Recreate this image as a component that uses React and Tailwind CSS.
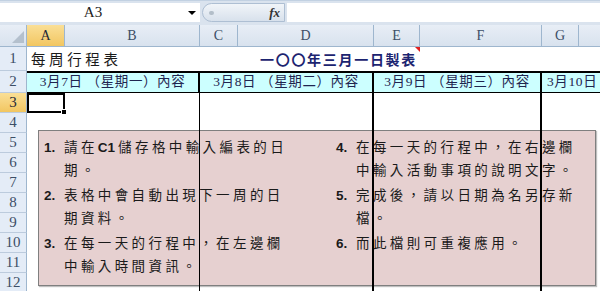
import React from "react";

function RH({ n, active, first }) {
  return (
    <div
      className={`w-[27px] shrink-0 flex justify-center border-r border-b border-r-[#9eb6ce] border-b-[#bccbdd] text-[15px] leading-none ${
        first ? "items-end pb-[4px]" : "items-center"
      } ${
        active
          ? "bg-linear-to-b from-[#fadf96] to-[#f2c660] text-[#1f2937]"
          : "bg-[#e4ecf7] text-[#3c4e66]"
      }`}
    >
      {n}
    </div>
  );
}

function ColHead({ w, label, active }) {
  return (
    <div
      className={`${w} shrink-0 h-full flex items-center justify-center border-r border-[#9eb6ce] text-[14px] ${
        active
          ? "bg-linear-to-b from-[#fadf96] to-[#f2c660] text-[#1f2937]"
          : "text-[#3c4e66]"
      }`}
    >
      {label}
    </div>
  );
}

function PlainRow({ n }) {
  return (
    <div className="relative z-10 h-[20px] shrink-0 flex">
      <RH n={n} />
      <div className="w-[38px] shrink-0" />
      <div className="w-[135px] shrink-0 border-r border-black" />
      <div className="w-[38px] shrink-0" />
      <div className="w-[136px] shrink-0 border-r-2 border-black" />
      <div className="w-[46px] shrink-0" />
      <div className="w-[122px] shrink-0 border-r-2 border-black" />
      <div className="w-[37px] shrink-0" />
      <div className="flex-1" />
    </div>
  );
}

function Item({ num, lines, first }) {
  return (
    <div className={`flex ${first ? "" : "mt-[2px]"}`}>
      <div className="w-[20px] shrink-0 font-bold tracking-normal">{num}</div>
      <div>
        {lines.map((l, i) => (
          <div key={i} className="whitespace-nowrap">
            {l}
          </div>
        ))}
      </div>
    </div>
  );
}

export default function App() {
  return (
    <div className="w-[600px] h-[291px] overflow-hidden bg-white flex flex-col font-['Liberation_Serif','Noto_Sans_CJK_TC',serif]">
      {/* formula bar */}
      <div className="h-[25px] shrink-0 bg-[#dae3ee] border-t border-[#c2d1e2] flex pt-[2px] pb-[3px]">
        <div className="w-[200px] shrink-0 bg-white flex items-center">
          <div className="w-[186px] text-center text-[15px] text-[#222] leading-none">A3</div>
          <div className="w-0 h-0 border-l-[4px] border-r-[4px] border-t-[4px] border-l-transparent border-r-transparent border-t-black ml-[2px]" />
        </div>
        <div className="ml-[2px] w-[83px] shrink-0 rounded-l-full border border-[#aebfd3] bg-linear-to-b from-[#f1f5f9] to-[#d8e1ec] flex items-center justify-between pl-[6px] pr-[4px]">
          <div className="w-[5px] h-[4px] rounded-full bg-[#b3bec9]" />
          <span className="italic font-bold text-[13px] text-[#333] leading-none">fx</span>
        </div>
        <div className="flex-1 bg-white ml-[2px]" />
      </div>

      {/* column headers */}
      <div className="h-[22px] shrink-0 flex bg-linear-to-b from-[#e8eef6] to-[#d8e2ee] border-b border-[#9eb6ce]">
        <div className="w-[27px] shrink-0 h-full relative border-r border-[#9eb6ce]">
          <div className="absolute right-[2px] bottom-[3px] w-0 h-0 border-b-[12px] border-l-[12px] border-b-[#b4c0cd] border-l-transparent" />
        </div>
        <ColHead w="w-[38px]" label="A" active />
        <ColHead w="w-[135px]" label="B" />
        <ColHead w="w-[38px]" label="C" />
        <ColHead w="w-[136px]" label="D" />
        <ColHead w="w-[46px]" label="E" />
        <ColHead w="w-[122px]" label="F" />
        <ColHead w="w-[37px]" label="G" />
        <div className="flex-1" />
      </div>

      {/* body */}
      <div className="flex-1 relative overflow-hidden bg-white">
        {/* text box lying over the sheet */}
        <div className="absolute z-0 left-[38px] top-[83px] w-[558px] h-[156px] bg-[#e6d0d0] border border-[#7f7f7f] shadow-[1px_1px_1px_rgba(0,0,0,0.25)] flex font-['Liberation_Sans','Noto_Sans_CJK_TC',sans-serif] text-[13.5px] leading-[23px] tracking-[3.4px] text-[#1a1a1a]">
          <div className="w-[297px] shrink-0 pl-[5px] pt-[5px]">
            <Item first num="1." lines={[<>請在<span className="tracking-normal font-semibold mr-[3px]">C1</span>儲存格中輸入編表的日</>, "期。"]} />
            <Item num="2." lines={["表格中會自動出現下一周的日", "期資料。"]} />
            <Item num="3." lines={["在每一天的行程中，在左邊欄", "中輸入時間資訊。"]} />
          </div>
          <div className="flex-1 pt-[5px]">
            <Item first num="4." lines={["在每一天的行程中，在右邊欄", "中輸入活動事項的說明文字。"]} />
            <Item num="5." lines={["完成後，請以日期為名另存新", "檔。"]} />
            <Item num="6." lines={["而此檔則可重複應用。"]} />
          </div>
        </div>

        {/* row 1 */}
        <div className="relative z-10 h-[24px] flex">
          <RH n="1" first />
          <div className="w-[173px] shrink-0 flex items-center pl-[4px] pt-[3px] text-[14.5px] tracking-[3.6px] text-[#1a1a1a] whitespace-nowrap">
            每周行程表
          </div>
          <div className="w-[220px] shrink-0 relative flex items-center justify-end pr-[3px] pt-[3px] text-[14px] font-bold tracking-[1.7px] text-[#1c2470] whitespace-nowrap">
            一〇〇年三月一日製表
            <div className="absolute right-0 top-0 w-0 h-0 border-t-[5px] border-l-[5px] border-t-[#e02020] border-l-transparent" />
          </div>
          <div className="flex-1" />
        </div>

        {/* row 2 */}
        <div className="relative z-10 h-[22px] flex">
          <RH n="2" />
          <div className="flex-1 flex border-t-2 border-b border-black bg-[#ccffff] text-[13.5px] tracking-[0.6px] text-[#1f2550] whitespace-nowrap">
            <div className="w-[173px] shrink-0 border-r-2 border-black flex items-center justify-center">3月7日 （星期一）內容</div>
            <div className="w-[174px] shrink-0 border-r-2 border-black flex items-center justify-center">3月8日 （星期二）內容</div>
            <div className="w-[168px] shrink-0 border-r-2 border-black flex items-center justify-center">3月9日 （星期三）內容</div>
            <div className="flex-1 overflow-hidden flex items-center pl-[5px]">3月10日 （星期四）內容</div>
          </div>
        </div>

        {/* row 3 */}
        <div className="relative z-10 h-[20px] flex">
          <RH n="3" active />
          <div className="w-[38px] shrink-0 relative border-2 border-black">
            <div className="absolute -right-[4px] -bottom-[4px] w-[6px] h-[6px] bg-black border border-white" />
          </div>
          <div className="w-[135px] shrink-0 border-r border-black" />
          <div className="w-[38px] shrink-0" />
          <div className="w-[136px] shrink-0 border-r-2 border-black" />
          <div className="w-[46px] shrink-0" />
          <div className="w-[122px] shrink-0 border-r-2 border-black" />
          <div className="w-[37px] shrink-0" />
          <div className="flex-1" />
        </div>

        {["4", "5", "6", "7", "8", "9", "10", "11", "12"].map((n) => (
          <PlainRow key={n} n={n} />
        ))}
      </div>
    </div>
  );
}
